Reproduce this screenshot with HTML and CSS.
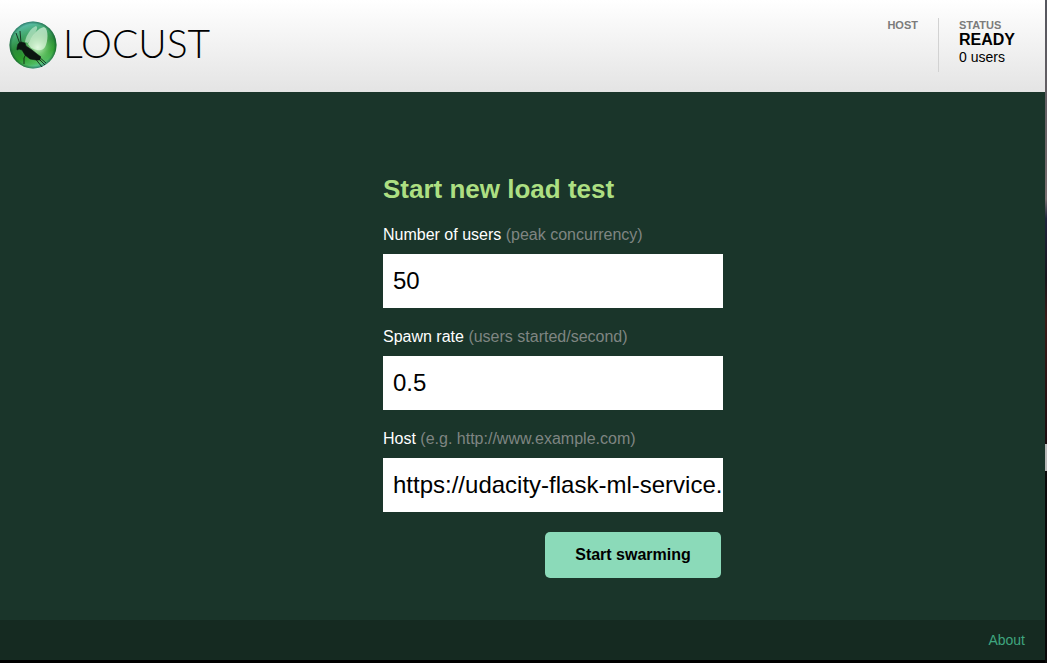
FILE: index.html
```html
<!DOCTYPE html>
<html lang="en">
<head>
<meta charset="utf-8">
<title>Locust</title>
<link rel="stylesheet" href="styles.css">
</head>
<body>
<div class="page">
  <header class="top">
    <div class="brand">
      <svg class="logo" viewBox="0 0 48 48" aria-hidden="true">
        <defs>
          <linearGradient id="ball" x1=".3" y1="0" x2=".6" y2="1">
            <stop offset="0" stop-color="#62c4c0"/>
            <stop offset=".22" stop-color="#48ad78"/>
            <stop offset=".5" stop-color="#2a8a3a"/>
            <stop offset=".72" stop-color="#2c9c2c"/>
            <stop offset=".88" stop-color="#4cb85c"/>
            <stop offset="1" stop-color="#62d0b4"/>
          </linearGradient>
          <radialGradient id="glow" cx=".6" cy=".55" r=".38">
            <stop offset="0" stop-color="#e4ffe0" stop-opacity=".9"/>
            <stop offset=".45" stop-color="#9be29a" stop-opacity=".55"/>
            <stop offset="1" stop-color="#5cc05c" stop-opacity="0"/>
          </radialGradient>
          <radialGradient id="rim" cx=".5" cy=".5" r=".5">
            <stop offset=".88" stop-color="#0b4a34" stop-opacity="0"/>
            <stop offset="1" stop-color="#0b4a34" stop-opacity=".6"/>
          </radialGradient>
        </defs>
        <circle cx="24" cy="24" r="23.5" fill="url(#ball)"/>
        <circle cx="24" cy="24" r="23.5" fill="url(#glow)"/>
        <circle cx="24" cy="24" r="23.5" fill="url(#rim)"/>
        <path d="M16 21C17 14 22 7 27 5c2 1 1 4-1 7l-7 10z" fill="#d0f0d8" fill-opacity=".6"/>
        <path d="M19 23C23 14 29 7 35 6c5 2 4 15 1 20-3 5-9 3-14 1z" fill="#e6fae6" fill-opacity=".65"/>
        <path d="M8 27l1-4 3-2 4 1 1 3 6 4 5 4 4 3-1 1 0 2-4 0-6-1-5-4-3-5-3-1-2 1z" fill="#0b1610" stroke="#0b1610" stroke-width=".6"/>
        <path d="M11 23L7 12M12 22L11 10M15 28l2 5-2 4 0 6M25 36l8 10M29 35l8 7M29 37l7 7" fill="none" stroke="#0b1610" stroke-width=".8"/>
      </svg>
      <span class="wordmark">LOCUST</span>
    </div>
    <div class="boxes">
      <div class="box">
        <div class="box-label">HOST</div>
      </div>
      <div class="box status">
        <div class="box-label">STATUS</div>
        <div class="state">READY</div>
        <div class="users">0 users</div>
      </div>
    </div>
  </header>
  <main class="main">
    <form class="start">
      <h2 class="title">Start new load test</h2>
      <label class="label" for="users">Number of users <span class="hint">(peak concurrency)</span></label>
      <input class="field" id="users" type="text" value="50">
      <label class="label" for="rate">Spawn rate <span class="hint">(users started/second)</span></label>
      <input class="field" id="rate" type="text" value="0.5">
      <label class="label" for="host">Host <span class="hint">(e.g. http://www.example.com)</span></label>
      <input class="field" id="host" type="text" value="https://udacity-flask-ml-service.">
      <button class="submit" type="button">Start swarming</button>
    </form>
  </main>
  <footer class="footer"><a class="about" href="#">About</a></footer>
</div>
<div class="edge"></div>
</body>
</html>
```
FILE: styles.css
```css
* {
  box-sizing: border-box;
}

body {
  margin: 0;
  min-height: 100vh;
  display: flex;
  background: #000;
  font-family: "Liberation Sans", Arial, sans-serif;
  font-size: 16px;
}

.page {
  flex: 1;
  display: flex;
  flex-direction: column;
  margin-bottom: 3px;
  background: #1a352a;
}

.edge {
  width: 2px;
  background: linear-gradient(#55565e 0%, #6e6668 24%, #7a6f70 30%, #20263c 33%, #17161c 42%, #3a1c18 48%, #1c0d10 67%, #b8b8b8 67%, #b8b8b8 71%, #0a0a0a 71%, #0a0a0a 100%);
}

.top {
  display: flex;
  justify-content: space-between;
  height: 92px;
  padding: 18px 30px 20px 9px;
  background: linear-gradient(#ffffff, #e4e4e4);
}

.brand {
  display: flex;
  align-items: center;
  gap: 6px;
}

.logo {
  width: 48px;
  height: 48px;
}

.wordmark {
  padding-bottom: 4px;
  color: #000;
  font-family: Lato, "Liberation Sans", sans-serif;
  font-size: 39px;
  font-weight: 300;
  line-height: 48px;
}

.boxes {
  display: flex;
}

.box {
  padding-right: 20px;
}

.status {
  padding: 0 0 0 20px;
  border-left: 1px solid #d2d2d2;
}

.box-label {
  color: #7b7b7b;
  font-size: 11px;
  font-weight: 700;
  line-height: 14px;
}

.state {
  font-weight: 700;
  line-height: 16px;
}

.users {
  font-size: 14px;
  line-height: 18px;
}

.main {
  flex: 1;
  padding: 80px 0 40px 61px;
}

.start {
  display: flex;
  flex-direction: column;
  width: 340px;
  margin: 0 auto;
}

.title {
  margin: 0 0 20px;
  color: #addf82;
  font-size: 26px;
  line-height: 34px;
}

.label {
  margin-bottom: 10px;
  color: #fff;
  line-height: 18px;
}

.hint {
  color: #7f8582;
}

.field {
  width: 100%;
  height: 54px;
  margin: 0 0 20px;
  padding: 0 0 0 10px;
  border: 0;
  background: #fff;
  color: #000;
  font: 24px "Liberation Sans", Arial, sans-serif;
}

.submit {
  align-self: flex-end;
  width: 176px;
  height: 46px;
  margin-right: 2px;
  border: 0;
  border-radius: 5px;
  background: #8bdab9;
  color: #000;
  font: 700 16px "Liberation Sans", Arial, sans-serif;
}

.footer {
  display: flex;
  align-items: center;
  justify-content: flex-end;
  height: 40px;
  padding: 0 20px;
  background: #152a21;
}

.about {
  color: #3fa57f;
  font-size: 14px;
  text-decoration: none;
}
```
